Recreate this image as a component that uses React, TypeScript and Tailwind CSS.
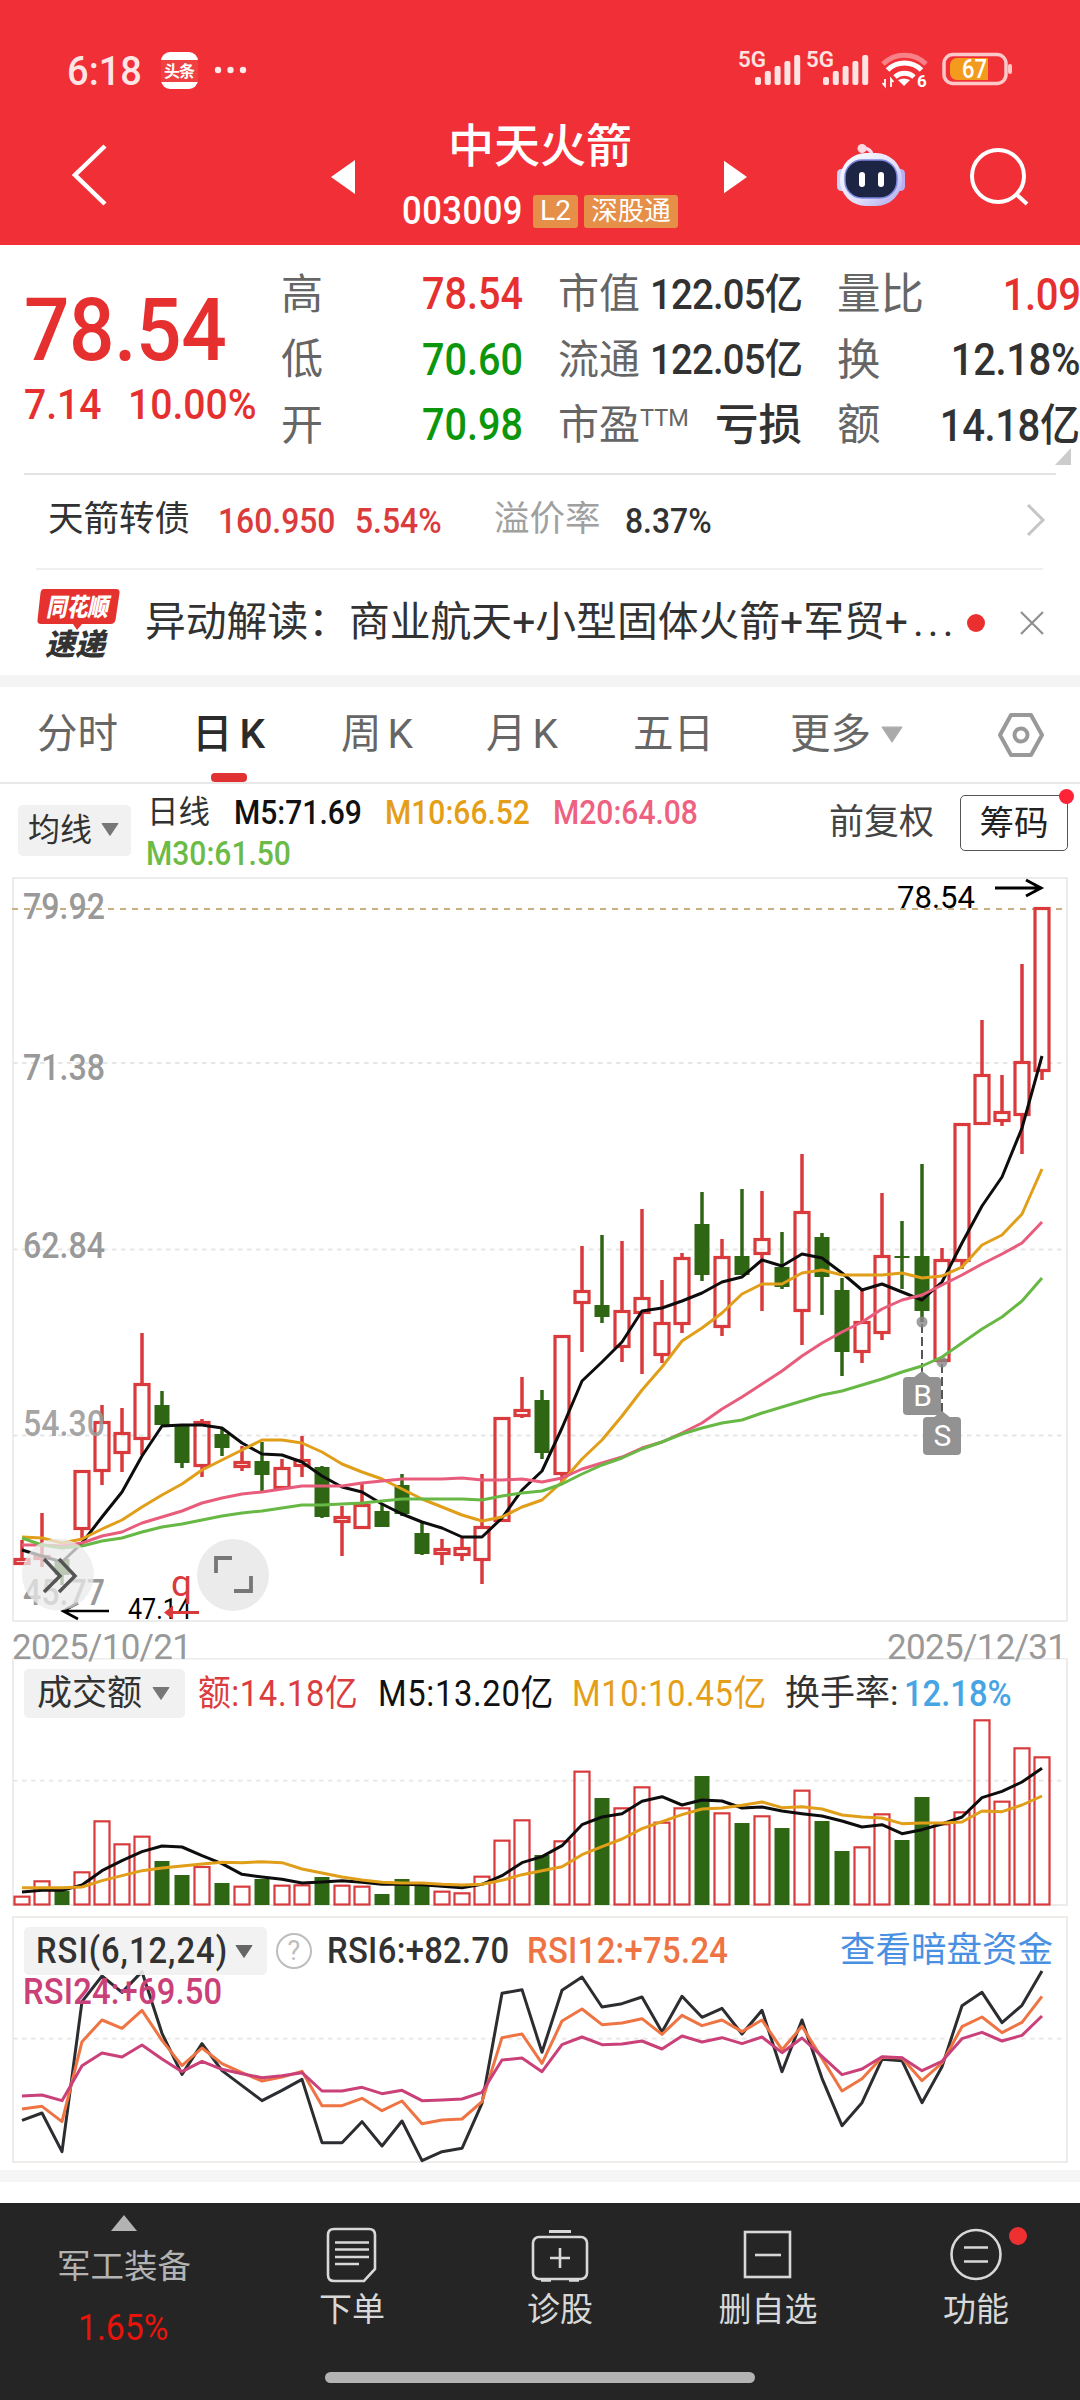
import React from 'react';
import clsx from 'clsx';

// [up, high, open/close top, open/close bottom, low], y values on the chart canvas
type Candle = [number, number, number, number, number];

const candles: Candle[] = [
    [1, 1540, 1558, 1565, 1565], [1, 1513, 1555, 1560, 1567], [0, 1559, 1559, 1575, 1585], [1, 1470, 1470, 1530, 1538],
    [1, 1405, 1421, 1472, 1485], [1, 1408, 1432, 1454, 1472], [1, 1333, 1383, 1440, 1455], [0, 1391, 1405, 1425, 1425],
    [0, 1426, 1426, 1463, 1468], [1, 1419, 1421, 1467, 1477], [0, 1428, 1434, 1448, 1456], [1, 1446, 1461, 1468, 1471],
    [0, 1442, 1461, 1475, 1491], [1, 1459, 1467, 1489, 1489], [1, 1436, 1459, 1467, 1477], [0, 1466, 1467, 1517, 1518],
    [1, 1506, 1516, 1523, 1556], [1, 1482, 1504, 1529, 1529], [0, 1505, 1511, 1527, 1527], [0, 1474, 1485, 1514, 1516],
    [0, 1521, 1533, 1554, 1555], [1, 1539, 1548, 1555, 1565], [1, 1538, 1547, 1556, 1561], [1, 1474, 1526, 1561, 1584],
    [1, 1417, 1417, 1522, 1522], [1, 1377, 1409, 1417, 1418], [0, 1390, 1400, 1453, 1459], [1, 1335, 1335, 1475, 1483],
    [1, 1246, 1290, 1304, 1352], [0, 1235, 1305, 1317, 1323], [1, 1241, 1310, 1348, 1362], [1, 1209, 1297, 1314, 1374],
    [1, 1280, 1322, 1356, 1363], [1, 1253, 1257, 1325, 1333], [0, 1192, 1224, 1275, 1281], [1, 1239, 1256, 1328, 1336],
    [0, 1189, 1256, 1275, 1275], [1, 1191, 1238, 1255, 1311], [0, 1232, 1267, 1287, 1289], [1, 1154, 1211, 1312, 1345],
    [0, 1233, 1237, 1277, 1315], [0, 1278, 1290, 1352, 1376], [1, 1290, 1321, 1353, 1363], [1, 1193, 1255, 1334, 1340],
    [0, 1221, 1256, 1258, 1289], [0, 1164, 1256, 1311, 1322], [1, 1248, 1259, 1362, 1362], [1, 1123, 1123, 1262, 1269],
    [1, 1020, 1074, 1125, 1125], [1, 1075, 1111, 1122, 1126], [1, 964, 1061, 1116, 1154], [1, 907, 907, 1072, 1080],
];

const ma5 = [1550, 1556, 1562, 1543, 1517, 1492, 1456, 1426, 1425, 1425, 1428, 1443, 1454, 1455, 1462, 1476, 1487, 1492, 1504, 1514, 1522, 1528, 1537, 1537, 1518, 1490, 1471, 1428, 1381, 1362, 1342, 1311, 1308, 1301, 1293, 1282, 1277, 1260, 1266, 1254, 1258, 1273, 1290, 1284, 1292, 1300, 1282, 1243, 1206, 1177, 1128, 1056];
const ma10 = [1537, 1538, 1543, 1539, 1529, 1520, 1507, 1495, 1484, 1470, 1460, 1450, 1440, 1440, 1443, 1452, 1464, 1472, 1479, 1489, 1499, 1507, 1515, 1521, 1517, 1507, 1500, 1482, 1459, 1440, 1416, 1390, 1367, 1341, 1328, 1313, 1294, 1284, 1284, 1273, 1270, 1275, 1275, 1275, 1273, 1278, 1276, 1267, 1245, 1235, 1214, 1169];
const ma20 = [1545, 1545, 1546, 1543, 1536, 1532, 1523, 1517, 1511, 1503, 1498, 1494, 1492, 1489, 1486, 1486, 1486, 1483, 1481, 1479, 1479, 1479, 1478, 1480, 1480, 1479, 1482, 1478, 1469, 1463, 1457, 1448, 1442, 1433, 1423, 1409, 1397, 1384, 1371, 1356, 1343, 1332, 1322, 1309, 1300, 1295, 1285, 1275, 1264, 1254, 1243, 1222];
const ma30 = [1538, 1545, 1548, 1546, 1541, 1538, 1532, 1527, 1524, 1520, 1516, 1513, 1511, 1508, 1505, 1505, 1504, 1503, 1501, 1499, 1499, 1499, 1499, 1500, 1496, 1493, 1491, 1484, 1474, 1465, 1458, 1449, 1442, 1434, 1428, 1423, 1420, 1413, 1407, 1401, 1395, 1391, 1385, 1379, 1372, 1366, 1357, 1343, 1329, 1317, 1301, 1278];

// thirds of a pixel from the top of each sub chart
const volume = [767, 721, 752, 694, 541, 610, 587, 663, 705, 678, 729, 737, 717, 734, 733, 711, 734, 737, 762, 717, 738, 752, 757, 707, 599, 538, 645, 601, 392, 474, 502, 439, 545, 502, 408, 517, 549, 526, 564, 449, 543, 633, 619, 520, 600, 471, 550, 514, 238, 482, 322, 349];
const vol5 = [756, 751, 751, 735, 692, 662, 635, 618, 621, 647, 671, 703, 711, 718, 729, 726, 722, 727, 733, 733, 734, 739, 743, 733, 707, 668, 650, 617, 554, 531, 521, 484, 470, 495, 480, 483, 504, 501, 513, 521, 528, 543, 561, 554, 581, 569, 552, 531, 473, 454, 426, 385];
const vol10 = [743, 743, 743, 741, 722, 707, 692, 684, 678, 672, 667, 668, 665, 668, 687, 699, 711, 720, 727, 729, 729, 733, 735, 733, 721, 704, 692, 680, 644, 620, 597, 566, 545, 524, 507, 504, 496, 486, 503, 500, 507, 525, 531, 534, 551, 549, 549, 546, 513, 515, 495, 468];
const rsi6 = [661, 639, 755, 305, 228, 277, 215, 400, 523, 431, 512, 557, 602, 571, 538, 728, 728, 665, 738, 663, 782, 755, 745, 610, 280, 269, 457, 271, 231, 321, 311, 291, 396, 289, 352, 325, 402, 331, 515, 360, 535, 677, 608, 478, 482, 608, 500, 317, 277, 368, 316, 213];
const rsi12 = [627, 619, 665, 425, 360, 385, 331, 421, 497, 444, 491, 518, 543, 531, 514, 617, 617, 595, 632, 603, 671, 660, 657, 605, 413, 402, 490, 363, 327, 374, 369, 356, 403, 346, 377, 360, 395, 360, 449, 379, 475, 573, 536, 472, 474, 542, 489, 380, 351, 398, 367, 289];
const rsi24 = [588, 585, 602, 497, 459, 471, 435, 477, 515, 484, 508, 521, 533, 527, 518, 573, 573, 562, 581, 571, 602, 600, 597, 577, 480, 474, 515, 434, 411, 434, 432, 423, 447, 408, 426, 413, 431, 411, 458, 414, 469, 524, 507, 470, 473, 512, 484, 416, 397, 423, 406, 348];

const RED = '#d93a3c';
const GREEN = '#2f6613';

const xAt = (i: number) => 22 + i * 20;

function Line({ data, color, div = 1, width = 3 }: { data: number[]; color: string; div?: number; width?: number }) {
    return (
        <polyline
            points={data.map((v, i) => `${xAt(i)},${v / div}`).join(' ')}
            fill="none"
            stroke={color}
            strokeWidth={width}
            strokeLinejoin="round"
        />
    );
}

// condensed digits
function Num({ children, className, right }: { children: React.ReactNode; className?: string; right?: boolean }) {
    return (
        <span className={clsx('flex shrink-0 whitespace-nowrap leading-none', right && 'justify-end', className)}>
            <span className={clsx('shrink-0 scale-x-[0.91]', right ? 'origin-right' : 'origin-left')}>{children}</span>
        </span>
    );
}

function Caret({ className }: { className?: string }) {
    return (
        <svg viewBox="0 0 18 13" className={clsx('shrink-0', className)}>
            <path d="M1 0.5h16L9 12.5z" fill="currentColor" stroke="currentColor" strokeLinejoin="round" />
        </svg>
    );
}

function SignalBars({ x }: { x: number }) {
    return (
        <g fill="#fde3e2">
            <text x={x - 17} y="67" fontSize="22" fontWeight="600" textLength="28" lengthAdjust="spacingAndGlyphs">5G</text>
            {[8, 14, 19, 24, 30].map((h, i) => (
                <rect key={i} x={x + i * 9.8} y={85 - h} width="6" height={h} rx="2" />
            ))}
        </g>
    );
}

function StatusBar() {
    return (
        <svg viewBox="0 0 1080 104" className="block h-[104px] w-full">
            <text x="67" y="85" fontSize="41" fontWeight="500" fill="#fff" fillOpacity="0.88" textLength="75" lengthAdjust="spacingAndGlyphs">6:18</text>
            <rect x="161" y="52" width="37" height="37" rx="9" fill="#fff" />
            <rect x="161" y="60" width="37" height="22" fill="#f04142" />
            <text x="164" y="77" fontSize="16" fontWeight="700" fill="#fff" textLength="31">头条</text>
            <g fill="#fff" fillOpacity="0.9">
                <circle cx="218" cy="70" r="3.2" />
                <circle cx="230.5" cy="70" r="3.2" />
                <circle cx="243" cy="70" r="3.2" />
            </g>
            <SignalBars x={755} />
            <SignalBars x={823} />
            <g fill="none" stroke="#fff">
                <path d="M883 64a31 31 0 0 1 43 0" strokeWidth="5" strokeOpacity="0.4" />
                <path d="M887.5 70a24 24 0 0 1 34 0" strokeWidth="5" />
                <path d="M895 77a14 14 0 0 1 19 0" strokeWidth="5" />
                <path d="M885 79v7l-2.5-3M891 87v-8l2.5 3" strokeWidth="1.8" />
            </g>
            <path d="M898 80q6-3 12 0l-6 6z" fill="#fff" />
            <text x="917" y="87" fontSize="17" fontWeight="700" fill="#fff">6</text>
            <rect x="944" y="54.5" width="62" height="29" rx="9" fill="none" stroke="#fdc9c8" strokeWidth="3.5" />
            <path d="M957 58h31v22h-31a7 7 0 0 1-7-7v-8a7 7 0 0 1 7-7z" fill="#f39b1d" />
            <rect x="1008" y="64" width="4" height="10" rx="2" fill="#fdc9c8" />
            <text x="962" y="78" fontSize="25" fontWeight="500" fill="#fff" textLength="25" lengthAdjust="spacingAndGlyphs">67</text>
        </svg>
    );
}

function Robot() {
    return (
        <svg viewBox="0 0 70 66" className="h-[66px] w-[70px]">
            <defs>
                <linearGradient id="shell" x1="0" y1="0" x2="1" y2="1">
                    <stop offset="0" stopColor="#fff" />
                    <stop offset="0.6" stopColor="#dfdffa" />
                    <stop offset="1" stopColor="#a9a2ee" />
                </linearGradient>
            </defs>
            <path d="M36 13q-1-7-10-7" fill="none" stroke="#f4d9ee" strokeWidth="3.5" />
            <circle cx="26" cy="6.5" r="4.5" fill="#fbd7e0" />
            <rect x="1" y="27" width="9" height="22" rx="4.5" fill="#cbd3fa" />
            <rect x="60" y="27" width="9" height="22" rx="4.5" fill="#b9aef2" />
            <rect x="4" y="11" width="62" height="53" rx="26" fill="url(#shell)" />
            <rect x="9" y="18" width="52" height="38" rx="17" fill="#1d2544" stroke="#7f86e0" strokeWidth="1.5" />
            <rect x="23" y="30" width="6" height="15" rx="3" fill="#fff" />
            <rect x="42" y="30" width="6" height="15" rx="3" fill="#fff" />
        </svg>
    );
}

function Header() {
    return (
        <header className="h-[245px] bg-[#f12f37] text-white">
            <StatusBar />
            <div className="flex h-[141px] items-start">
                <svg viewBox="0 0 38 64" className="mt-[39px] ml-[70px] h-[64px] w-[38px] shrink-0" fill="none" stroke="#fff" strokeWidth="4.5">
                    <path d="M35 3L5 32l30 29" />
                </svg>
                <svg viewBox="0 0 24 34" className="mt-[56px] ml-[223px] h-[34px] w-[24px] shrink-0"><path d="M24 0v34L0 17z" fill="#fff" /></svg>
                <div className="ml-[45px] flex w-[280px] shrink-0 flex-col items-center">
                    <h1 className="mt-[14px] text-[46px] leading-[56px] font-medium">中天火箭</h1>
                    <div className="mt-[18px] flex w-[276px] items-center gap-[6px]">
                        <Num className="w-[125px] text-[38px] font-medium tracking-[0.015em]">003009</Num>
                        <span className="flex h-[33px] w-[45px] items-center justify-center rounded-[3px] bg-[#e68f49] text-[28px] leading-none">L2</span>
                        <span className="flex h-[33px] w-[94px] items-center justify-center rounded-[3px] bg-[#e68f49] text-[26.5px] leading-none">深股通</span>
                    </div>
                </div>
                <svg viewBox="0 0 24 34" className="mt-[56px] ml-[44px] h-[34px] w-[23px] shrink-0"><path d="M0 0v34L24 17z" fill="#fff" /></svg>
                <div className="mt-[38px] ml-[89px] shrink-0"><Robot /></div>
                <svg viewBox="0 0 60 60" className="mt-[43px] ml-[63px] h-[60px] w-[60px] shrink-0" fill="none" stroke="#fff" strokeWidth="4">
                    <circle cx="29" cy="29" r="26" />
                    <path d="M47 47l11 10" />
                </svg>
            </div>
        </header>
    );
}

const quoteRows = [
    { a: '高', av: '78.54', ac: 'text-[#e5302f]', b: '市值', bv: '122.05亿', c: '量比', cv: '1.09', cc: 'text-[#e5302f]' },
    { a: '低', av: '70.60', ac: 'text-[#0c960c]', b: '流通', bv: '122.05亿', c: '换', cv: '12.18%', cc: 'text-[#323232]' },
    { a: '开', av: '70.98', ac: 'text-[#0c960c]', b: '市盈', sup: 'TTM', bv: '亏损', c: '额', cv: '14.18亿', cc: 'text-[#323232]' },
];

function Quote() {
    return (
        <section className="relative flex h-[228px] pt-[16px]">
            <div className="w-[256px] shrink-0 pl-[24px] text-[#e5302f]">
                <Num className="mt-[25px] w-[200px] text-[88px] font-medium tracking-[-0.005em]">78.54</Num>
                <div className="mt-[9px] flex">
                    <Num className="w-[104px] text-[43px] font-medium">7.14</Num>
                    <Num className="text-[43px] font-medium">10.00%</Num>
                </div>
            </div>
            <div className="flex w-[824px] shrink-0 flex-col pt-px">
                {quoteRows.map((r) => (
                    <div key={r.a} className="flex h-[65.500px] items-center text-[#666]">
                        <span className="ml-[25px] w-[60px] text-[42px] leading-none">{r.a}</span>
                        <Num right className={clsx('w-[182px] text-[43.5px] font-medium', r.ac)}>{r.av}</Num>
                        <span className="ml-[35px] w-[88px] shrink-0 text-[41px] leading-none whitespace-nowrap">
                            {r.b}
                            {r.sup && <span className="inline-block origin-left -translate-y-[13px] scale-x-[0.98] text-[24px] leading-none">{r.sup}</span>}
                        </span>
                        {r.sup ? (
                            <span className="w-[156px] text-right text-[43.5px] leading-none font-medium text-[#323232]">{r.bv}</span>
                        ) : (
                            <Num right className="w-[156px] text-[42px] font-medium tracking-[-0.02em] text-[#323232]">{r.bv}</Num>
                        )}
                        <span className="ml-[35px] w-[92px] shrink-0 text-[43.5px] leading-none">{r.c}</span>
                        <Num right className={clsx('w-[151px] text-[44px] font-medium tracking-[-0.01em]', r.cc)}>{r.cv}</Num>
                    </div>
                ))}
            </div>
            <svg viewBox="0 0 16 17" className="absolute top-[203px] left-[1055px] h-[17px] w-[16px]"><path d="M16 0v17H0z" fill="#ccc" /></svg>
        </section>
    );
}

function Bond() {
    return (
        <section className="mx-[24px] flex h-[95px] items-center border-t-2 border-[#e3e3e3] pb-[3px] text-[35px] leading-none text-[#323232]">
            <span className="ml-[24px] w-[170px] text-[35.5px]">天箭转债</span>
            <Num className="w-[137px] pt-[2px] font-medium text-[#db3b3d]">160.950</Num>
            <Num className="w-[139px] pt-[2px] font-medium text-[#db3b3d]">5.54%</Num>
            <span className="w-[131px] text-[35.5px] text-[#a0a0a0]">溢价率</span>
            <Num className="w-[100px] pt-[2px] font-medium">8.37%</Num>
            <svg viewBox="0 0 20 34" className="ml-[301px] h-[34px] w-[20px] shrink-0" fill="none" stroke="#c6c6c6" strokeWidth="3">
                <path d="M2 2l15 15L2 32" />
            </svg>
        </section>
    );
}

function News() {
    return (
        <section className="mr-[37px] ml-[36px] flex h-[107px] items-center border-t-2 border-[#efefef]">
            <svg viewBox="0 0 84 76" className="h-[76px] w-[84px] shrink-0 overflow-visible">
                <path d="M8 4h72q4 0 3.5 4l-4 27q-1 4-5 4H46l-5 6-4-6H5q-4 0-3.5-4l3-27Q5 4 8 4z" fill="#e5322f" />
                <text x="10" y="31" fontSize="25" fontWeight="900" fill="#fff" fontStyle="italic" textLength="62" lengthAdjust="spacingAndGlyphs">同花顺</text>
                <text x="9" y="70" fontSize="30" fontWeight="900" fill="#333" fontStyle="italic" textLength="60" lengthAdjust="spacingAndGlyphs">速递</text>
            </svg>
            <span className="ml-[25px] w-[815px] shrink-0 text-[40.800px] leading-none whitespace-nowrap text-[#323232]">
                异动解读：商业航天+小型固体火箭+军贸+<span className="ml-[5px] tracking-[0.1em]">...</span>
            </span>
            <span className="ml-[7px] size-[18px] shrink-0 rounded-full bg-[#eb2f2f]" />
            <svg viewBox="0 0 24 24" className="ml-[35px] size-[24px] shrink-0" stroke="#8f8f8f" strokeWidth="2.2"><path d="M1 1l22 22M23 1L1 23" /></svg>
        </section>
    );
}

function Tabs() {
    return (
        <nav className="flex h-[97px] items-center border-b-2 border-[#e8e8e8] pl-[37px] text-[40.500px] leading-none text-[#666]">
            <span className="w-[155px] shrink-0">分时</span>
            <span className="relative w-[149px] shrink-0 font-medium text-[#2b2b2b]">
                日<span className="ml-[7px]">K</span>
                <span className="absolute top-[59px] left-[19px] h-[9px] w-[36px] rounded-[4px] bg-[#e03232]" />
            </span>
            <span className="w-[145px] shrink-0">周<span className="ml-[6px]">K</span></span>
            <span className="w-[147px] shrink-0">月<span className="ml-[6px]">K</span></span>
            <span className="w-[157px] shrink-0">五日</span>
            <span className="w-[91px] shrink-0">更多</span>
            <Caret className="h-[17px] w-[22px] text-[#aaa]" />
            <svg viewBox="0 0 46 44" className="ml-[95px] h-[44px] w-[46px]" fill="none" stroke="#999" strokeWidth="4" strokeLinejoin="round">
                <path d="M13 2h20l11 20-11 20H13L2 22z" />
                <circle cx="23" cy="22" r="6.5" />
            </svg>
        </nav>
    );
}

function Averages() {
    return (
        <div className="flex h-[86px] pt-[11px]">
            <button className="mt-[10px] ml-[18px] flex h-[51px] w-[113px] shrink-0 items-center rounded-[5px] bg-[#f1f1f1] pb-[2px] pl-[10px] text-[32px] leading-none text-[#323232]">
                均线<Caret className="ml-[9px] h-[13px] w-[18px] text-[#777]" />
            </button>
            <div className="ml-[16px] w-[683px] shrink-0 text-[33px] leading-none">
                <div className="mt-[1px] flex items-center font-medium">
                    <span className="w-[87px] text-[31.500px] font-normal text-[#323232]">日线</span>
                    <Num className="w-[151px] text-[#111]">M5:71.69</Num>
                    <Num className="w-[168px] text-[#e49e18]">M10:66.52</Num>
                    <Num className="text-[#ee6180]">M20:64.08</Num>
                </div>
                <Num className="mt-[8px] -ml-[1px] font-medium text-[#6bbb46]">M30:61.50</Num>
            </div>
            <span className="mt-[10px] w-[130px] shrink-0 -translate-x-px text-[35px] leading-none text-[#444]">前复权</span>
            <button className="relative flex h-[56px] w-[108px] shrink-0 items-center justify-center rounded-[5px] border-[1.500px] border-[#555] text-[34.5px] leading-none text-[#222]">
                筹码
                <span className="absolute -top-[7px] -right-[7px] size-[15px] rounded-full bg-[#ff2338]" />
            </button>
        </div>
    );
}

function PriceChart() {
    const label = { fontSize: 36, fontWeight: 500, fill: '#999', textLength: 82, lengthAdjust: 'spacingAndGlyphs' as const };
    return (
        <svg viewBox="0 870 1080 788" className="relative z-10 block h-[788px] w-[1080px] overflow-visible">
            <rect x="13" y="878" width="1054" height="743" fill="none" stroke="#ececec" strokeWidth="2" />
            {[1063, 1249.5, 1435.5].map((y) => (
                <path key={y} d={`M13 ${y}H1067`} stroke="#e6e6e6" strokeWidth="1.8" strokeDasharray="4.500 4.500" />
            ))}
            <path d="M12 909H1067" stroke="#c9ae82" strokeWidth="2" strokeDasharray="6 6" />
            <text x="23" y="919" {...label}>79.92</text>
            <text x="23" y="1080" {...label}>71.38</text>
            <text x="23" y="1258" {...label}>62.84</text>
            <text x="23" y="1605" {...label}>45.77</text>

            {candles.map(([up, hi, top, bot, lo], i) => {
                const x = xAt(i);
                const color = up ? RED : GREEN;
                return (
                    <g key={i}>
                        <path d={`M${x} ${hi}V${top}M${x} ${bot}V${lo}`} stroke={color} strokeWidth={3.5} />
                        {up ? (
                            <rect x={x - 7} y={top + 1.5} width={14} height={Math.max(bot - top - 3, 2)} fill="none" stroke={color} strokeWidth={3.2} />
                        ) : (
                            <rect x={x - 7.5} y={top} width={15} height={bot - top} fill={color} />
                        )}
                    </g>
                );
            })}
            <text x="23" y="1436" {...label} fillOpacity="0.9">54.30</text>

            <g stroke="#555" strokeWidth="2" strokeDasharray="9 4">
                <path d="M922 1324V1374" />
                <path d="M942 1364V1414" />
            </g>
            <circle cx="922" cy="1322" r="5.5" fill="#888" fillOpacity="0.8" />
            <circle cx="942" cy="1362" r="5.5" fill="#888" fillOpacity="0.8" />

            <Line data={ma5} color="#0d0d0d" />
            <Line data={ma10} color="#e09e19" />
            <Line data={ma20} color="#e85c7c" />
            <Line data={ma30} color="#67b845" />

            <g fill="#929292">
                <path d="M913 1378l9-7 9 7zM933 1418l9-7 9 7z" />
                <rect x="903" y="1377" width="38" height="38" rx="4" />
                <rect x="923" y="1417" width="38" height="38" rx="4" />
            </g>
            <text x="922.5" y="1406" fontSize="30" fill="#fff" textAnchor="middle">B</text>
            <text x="942.5" y="1446" fontSize="30" fill="#fff" textAnchor="middle">S</text>

            <text x="897" y="908" fontSize="31" fill="#000" textLength="78" lengthAdjust="spacingAndGlyphs">78.54</text>
            <path d="M995 888H1040M1026 880l15 8-15 8" fill="none" stroke="#000" strokeWidth="3" />

            <path d="M109 1611H64M78 1603l-15 8 15 8" fill="none" stroke="#000" strokeWidth="2.6" />
            <circle cx="58" cy="1574.5" r="36" fill="#ebebeb" fillOpacity="0.75" />
            <path d="M44 1559l16 17-16 16M59 1559l16 17-16 16" fill="none" stroke="#555" strokeWidth="3.5" />
            <circle cx="233" cy="1575" r="36" fill="#ebebeb" />
            <path d="M216 1573v-15h16M251 1576v15h-17" fill="none" stroke="#777" strokeWidth="3.8" />

            <text x="128" y="1619" fontSize="30" fill="#000" textLength="63" lengthAdjust="spacingAndGlyphs">47.14</text>
            <text x="171" y="1596" fontSize="37" fill={RED}>q</text>
            <path d="M199 1612.500H168" stroke={RED} strokeWidth="3" />
            <path d="M164 1612.500l9-7v14z" fill={RED} />

            <g fontSize="35" fill="#999">
                <text x="12" y="1658.500" textLength="180">2025/10/21</text>
                <text x="887" y="1658.500" textLength="180">2025/12/31</text>
            </g>
        </svg>
    );
}

function VolumeChart() {
    return (
        <section className="relative h-[258px] pt-[11px]">
            <svg viewBox="0 18 1080 258" className="absolute inset-0 h-[258px] w-[1080px]">
                <rect x="13" y="18.5" width="1054" height="246.5" fill="none" stroke="#ececec" strokeWidth="2" />
                <path d="M13 140.700H1067" stroke="#e6e6e6" strokeWidth="1.8" strokeDasharray="4.500 4.500" />
                {volume.map((v, i) =>
                    candles[i][0] ? (
                        <rect key={i} x={xAt(i) - 7.5} y={v / 3 + 1} width={15} height={264.5 - v / 3 - 1} fill="none" stroke={RED} strokeWidth={2.2} />
                    ) : (
                        <rect key={i} x={xAt(i) - 7.5} y={v / 3} width={15} height={265 - v / 3} fill={GREEN} />
                    )
                )}
                <Line data={vol5} div={3} color="#0d0d0d" />
                <Line data={vol10} div={3} color="#e09e19" />
            </svg>
            <div className="relative flex items-center pl-[24px] text-[36px] leading-none font-medium">
                <button className="flex h-[49px] w-[161px] shrink-0 items-center rounded-[5px] bg-[#f1f1f1] pl-[13px] text-[35px] leading-none font-normal text-[#323232]">
                    成交额<Caret className="ml-[10px] h-[13px] w-[18px] text-[#777]" />
                </button>
                <Num className="ml-[13px] w-[180px] font-normal tracking-[0.018em] text-[#dc3c3e]">额:14.18亿</Num>
                <Num className="w-[194px] font-normal tracking-[0.02em] text-[#111]">M5:13.20亿</Num>
                <Num className="w-[213px] font-normal tracking-[0.02em] text-[#e49e18]">M10:10.45亿</Num>
                <span className="w-[119px] shrink-0 text-[35px] font-normal whitespace-nowrap text-[#323232]">换手率:</span>
                <Num className="text-[#48a5e4]">12.18%</Num>
            </div>
        </section>
    );
}

function RsiChart() {
    return (
        <section className="relative h-[254px] pt-[11px]">
            <svg viewBox="0 16 1080 254" className="absolute inset-0 h-[254px] w-[1080px]">
                <rect x="13" y="17" width="1054" height="245" fill="none" stroke="#efecea" strokeWidth="2" />
                <path d="M13 138.700H1067" stroke="#e6e6e6" strokeWidth="1.8" strokeDasharray="4.500 4.500" />
                <Line data={rsi6} div={3} color="#2b2d30" />
            </svg>
            <div className="relative flex items-center pl-[24px] text-[36px] leading-none">
                <button className="flex h-[48px] w-[243px] shrink-0 items-center rounded-[5px] bg-[#f1f1f1]/90 pl-[12px] text-[#323232]">
                    <Num className="w-[199px] font-medium tracking-[0.03em]">RSI(6,12,24)</Num>
                    <Caret className="h-[13px] w-[18px] text-[#666]" />
                </button>
                <span className="ml-[9px] flex size-[36px] shrink-0 items-center justify-center rounded-full border-[2.500px] border-[#bdbdbd] text-[27px] text-[#bdbdbd]">?</span>
                <Num className="ml-[15px] w-[200px] font-medium tracking-[0.01em] text-[#323232]">RSI6:+82.70</Num>
                <Num className="w-[313px] font-medium tracking-[0.01em] text-[#ee7444]">RSI12:+75.24</Num>
                <span className="shrink-0 text-[35.500px] text-[#4a90e2]">查看暗盘资金</span>
            </div>
            <Num className="relative -mt-px ml-[23px] text-[36px] font-medium tracking-[0.005em] text-[#ca4079]">RSI24:+69.50</Num>
            <svg viewBox="0 16 1080 254" className="absolute inset-0 h-[254px] w-[1080px]">
                <Line data={rsi12} div={3} color="#ee7444" />
                <Line data={rsi24} div={3} color="#ca4079" />
            </svg>
        </section>
    );
}

function BottomNav() {
    return (
        <footer className="h-[197px] bg-[#252525] text-[#d8d8d8]">
            <div className="flex h-[169px] pl-[20px] text-[33px] leading-none">
                <div className="flex w-[208px] shrink-0 flex-col items-center pt-[12px]">
                    <svg viewBox="0 0 26 16" className="h-[16px] w-[26px]"><path d="M13 0l13 16H0z" fill="#b3b3b3" /></svg>
                    <span className="mt-[19px] text-[33.500px] text-[#b3b3b3]">军工装备</span>
                    <Num className="mt-[25px] w-[92px] text-[37px] text-[#e8140c]">1.65%</Num>
                </div>
                <div className="ml-[20px] flex w-[208px] shrink-0 flex-col items-center pt-[22px]">
                    <svg viewBox="0 0 56 60" className="h-[60px] w-[56px]" fill="none" stroke="currentColor" strokeWidth="2.6">
                        <path d="M10 4h35q6 0 6 6v34L40 56H10q-6 0-6-6V10q0-6 6-6z" />
                        <path d="M11 17.500h34M11 24.500h34M11 32h34M11 39h24" />
                    </svg>
                    <span className="mt-[8px]">下单</span>
                </div>
                <div className="flex w-[208px] shrink-0 flex-col items-center pt-[22px]">
                    <svg viewBox="0 0 60 60" className="h-[60px] w-[60px]" fill="none" stroke="currentColor" strokeWidth="2.6">
                        <path d="M19 6.500h22" strokeWidth="3" />
                        <rect x="3" y="12" width="54" height="42" rx="6" />
                        <path d="M30 23v20M20 33h20M11 55.500h10M39 55.500h10" />
                    </svg>
                    <span className="mt-[8px]">诊股</span>
                </div>
                <div className="flex w-[208px] shrink-0 flex-col items-center pt-[22px]">
                    <svg viewBox="0 0 60 60" className="h-[60px] w-[60px]" fill="none" stroke="currentColor" strokeWidth="2.6">
                        <rect x="7" y="7" width="45" height="45" />
                        <path d="M17 30h26" />
                    </svg>
                    <span className="mt-[8px]">删自选</span>
                </div>
                <div className="relative flex w-[208px] shrink-0 flex-col items-center pt-[22px]">
                    <svg viewBox="0 0 60 60" className="h-[60px] w-[60px]" fill="none" stroke="currentColor" strokeWidth="2.6">
                        <circle cx="30" cy="29.5" r="24.5" />
                        <path d="M18 22.500h24M18 36.500h24" />
                    </svg>
                    <span className="mt-[8px]">功能</span>
                    <span className="absolute top-[24px] left-[137px] size-[18px] rounded-full bg-[#ee3030]" />
                </div>
            </div>
            <div className="mx-auto h-[11px] w-[430px] rounded-full bg-[#b3b3b3]" />
        </footer>
    );
}

export default function App() {
    return (
        <div className="h-[2400px] w-[1080px] overflow-hidden bg-white font-[Roboto,'Noto_Sans_CJK_SC',sans-serif]">
            <Header />
            <Quote />
            <Bond />
            <News />
            <div className="h-[12px] bg-[#f4f4f4]" />
            <Tabs />
            <Averages />
            <PriceChart />
            <VolumeChart />
            <RsiChart />
            <div className="h-[12px] bg-[#f5f5f5]" />
            <div className="h-[21px]" />
            <BottomNav />
        </div>
    );
}
